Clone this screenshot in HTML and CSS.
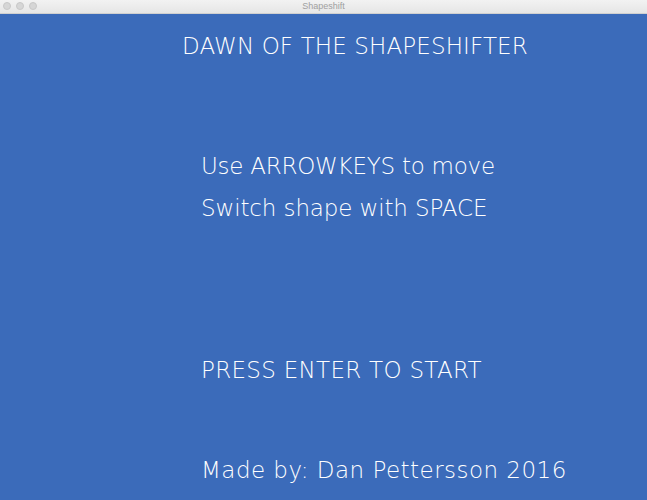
FILE: index.html
```html
<!DOCTYPE html>
<html>
<head>
<meta charset="utf-8">
<link rel="stylesheet" href="styles.css">
</head>
<body>
<div class="window">
  <div class="titlebar">
    <div class="lights">
      <span class="light"></span>
      <span class="light"></span>
      <span class="light"></span>
    </div>
    <div class="wintitle">Shapeshift</div>
  </div>
  <div class="screen">
    <div class="line title">DAWN OF THE SHAPESHIFTER</div>
    <div class="line inst1">Use ARROWKEYS to move</div>
    <div class="line inst2">Switch shape with SPACE</div>
    <div class="line press">PRESS ENTER TO START</div>
    <div class="line credit">Made by: Dan Pettersson 2016</div>
  </div>
</div>
</body>
</html>
```
FILE: styles.css
```css
html, body {
  margin: 0;
  padding: 0;
}
body {
  width: 647px;
  height: 500px;
  overflow: hidden;
  background: #3b6bba;
}
.window {
  width: 647px;
  height: 500px;
  display: flex;
  flex-direction: column;
}
.titlebar {
  height: 14px;
  flex: none;
  background: linear-gradient(#f2f2f2, #e6e6e6);
  border-bottom: 1px solid #d0d0d0;
  box-sizing: border-box;
  position: relative;
  display: flex;
  align-items: center;
  justify-content: center;
}
.lights {
  position: absolute;
  left: 3px;
  top: 2px;
  display: flex;
  gap: 5px;
}
.light {
  width: 8px;
  height: 8px;
  border-radius: 50%;
  background: #d6d6d6;
  border: 0.5px solid #c8c8c8;
  box-sizing: border-box;
}
.wintitle {
  font-family: "Liberation Sans", Arial, sans-serif;
  font-size: 9px;
  color: #a0a0a0;
  line-height: 13px;
}
.screen {
  flex: 1;
  background: #3b6bba;
  padding: 21px 0 0 182px;
  display: flex;
  flex-direction: column;
  align-items: flex-start;
}
.line {
  font-family: "DejaVu Sans", Verdana, sans-serif;
  font-weight: 200;
  font-size: 23px;
  line-height: 23px;
  color: #ffffff;
  white-space: nowrap;
  margin-left: 19px;
}
.title {
  margin-left: 0;
  letter-spacing: 0.12px;
}
.inst1 {
  margin-top: 97px;
  letter-spacing: -0.25px;
}
.inst2 {
  margin-top: 19px;
  letter-spacing: -0.12px;
}
.press {
  margin-top: 139px;
  letter-spacing: 0.3px;
}
.credit {
  margin-top: 77px;
  letter-spacing: 0.47px;
}
```
